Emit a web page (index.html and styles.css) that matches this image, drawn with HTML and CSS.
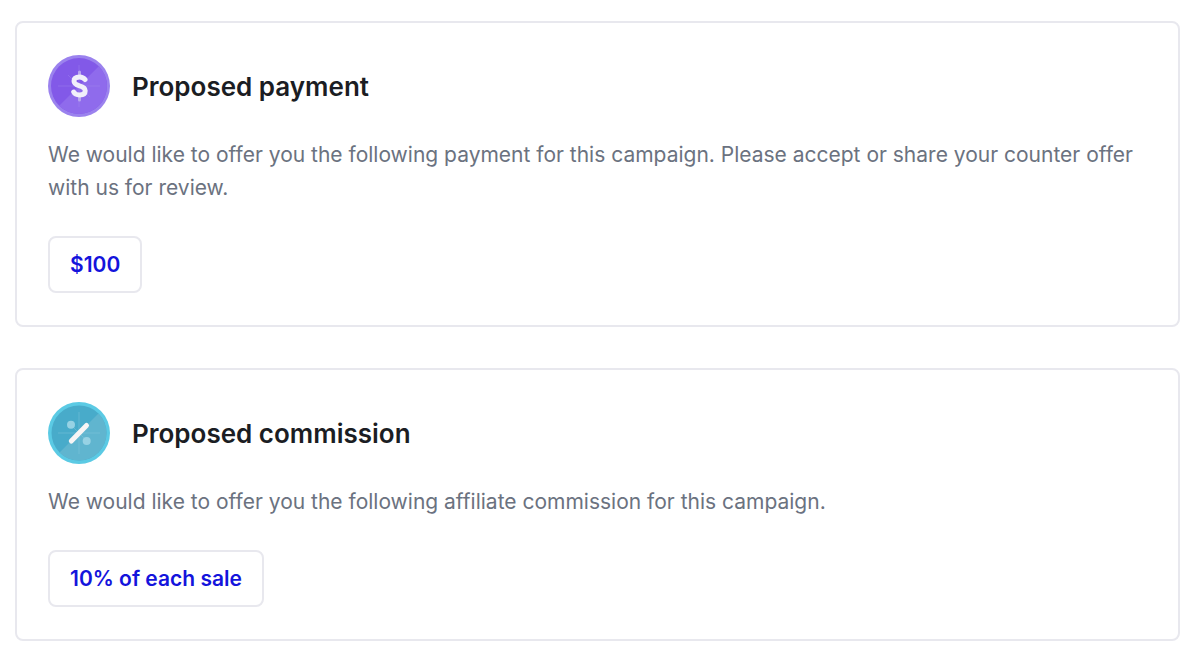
FILE: index.html
```
<!DOCTYPE html>
<html lang="en">
<head>
    <meta charset="UTF-8">
    <meta name="viewport" content="width=device-width, initial-scale=1.0">
    <title>Campaign offer</title>
    <link rel="stylesheet" href="styles.css">
</head>
<body>
    <main class="offers">
        <section class="card">
            <div class="card-header">
                <svg class="coin" viewBox="0 0 62 62" aria-hidden="true">
                    <circle cx="31" cy="31" r="31" fill="#9b82ee"/>
                    <circle cx="31" cy="31" r="28" fill="#8259e8"/>
                    <path d="M50.8 11.2A28 28 0 0 1 11.2 50.8Z" fill="#8f6bec"/>
                    <path d="M10 31H52M31 10V52M20 20L42 42" stroke="#a48af0" stroke-width="1" opacity="0.4"/>
                    <path d="M31.500 17V21M31.500 41V45" stroke="#b9a6ee" stroke-width="3" stroke-linecap="round"/>
                    <path d="M37 24.500C35.500 22.500 33.800 22 31.500 22C28 22 26 23.500 26 26C26 29 28.500 30 31.500 30.800C35 31.700 37.200 32.800 37.200 35.800C37.200 38.800 35 40 31.700 40C28.700 40 26.700 39 25.700 37" fill="none" stroke="#f1effa" stroke-width="5" stroke-linecap="round" stroke-linejoin="round"/>
                </svg>
                <h2>Proposed payment</h2>
            </div>
            <p>We would like to offer you the following payment for this campaign. Please accept or share your counter offer with us for review.</p>
            <div class="amount">$100</div>
        </section>

        <section class="card">
            <div class="card-header">
                <svg class="coin" viewBox="0 0 62 62" aria-hidden="true">
                    <circle cx="31" cy="31" r="31" fill="#5bcae4"/>
                    <circle cx="31" cy="31" r="27.500" fill="#48abca"/>
                    <path d="M50.450 11.550A27.500 27.500 0 0 1 11.550 50.450Z" fill="#60b5cf"/>
                    <path d="M10 31H52M31 10V52M20 20L42 42" stroke="#8accdf" stroke-width="1" opacity="0.4"/>
                    <circle cx="23" cy="22.700" r="4" fill="#97d2e4"/>
                    <circle cx="38.700" cy="39" r="4" fill="#97d2e4"/>
                    <path d="M23.300 39L38.500 23.500" stroke="#f7f5f5" stroke-width="5" stroke-linecap="round"/>
                </svg>
                <h2>Proposed commission</h2>
            </div>
            <p>We would like to offer you the following affiliate commission for this campaign.</p>
            <div class="amount">10% of each sale</div>
        </section>
    </main>
</body>
</html>
```
FILE: styles.css
```
body {
    margin: 0;
    font-family: Inter, "Liberation Sans", sans-serif;
    font-size: 21px;
    line-height: 33px;
    color: #6b7280;
    background: #fff;
}
.offers {
    display: flex;
    flex-direction: column;
    gap: 41px;
    padding: 21px 20px 24px 15px;
}
.card {
    padding: 32px 31px;
    border: 2px solid #e8e8ee;
    border-radius: 8px;
}
.card-header {
    display: flex;
    align-items: center;
    gap: 22px;
    margin-bottom: 21px;
}
.coin {
    flex: none;
    width: 62px;
    height: 62px;
}
h2 {
    margin: 0;
    font-size: 26px;
    font-weight: 600;
    color: #1b1d23;
}
p {
    margin: 0 0 32px;
}
.amount {
    width: fit-content;
    padding: 10px 20px;
    border: 2px solid #e8e8ee;
    border-radius: 8px;
    font-weight: 600;
    color: #1414dc;
}
```
